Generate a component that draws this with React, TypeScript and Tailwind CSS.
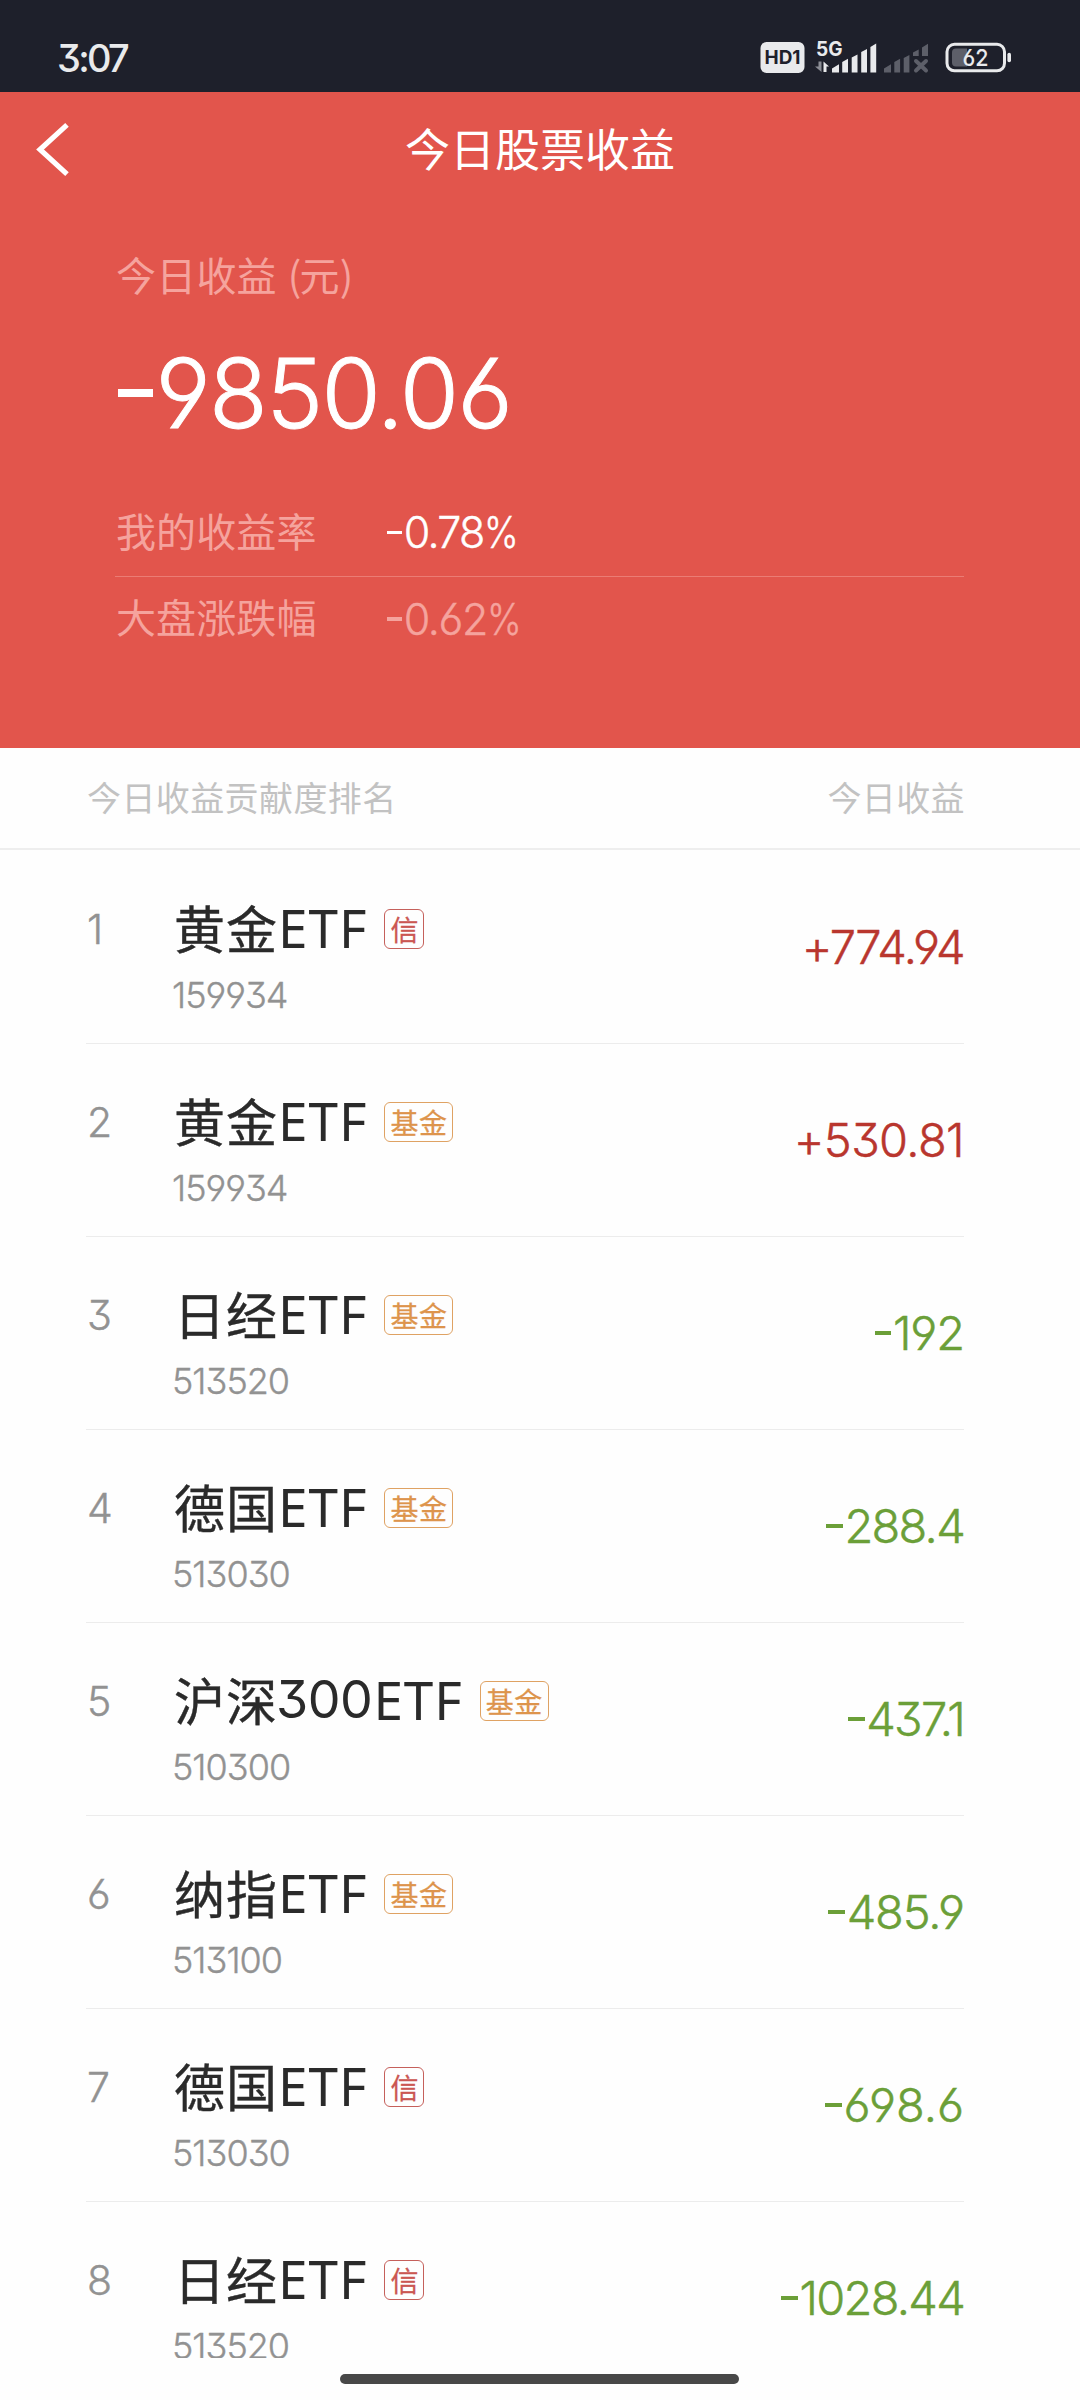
import React from "react";

type Holding = {
  name: string;
  code: string;
  tag: "信" | "基金";
  value: string;
  tracking: string;
  nameNum?: string;
};

const holdings: Holding[] = [
  { name: "黄金", code: "159934", tag: "信", value: "+774.94", tracking: "tracking-[-1.600px]" },
  { name: "黄金", code: "159934", tag: "基金", value: "+530.81", tracking: "tracking-[-0.600px]" },
  { name: "日经", code: "513520", tag: "基金", value: "-192", tracking: "tracking-[-1.100px]" },
  { name: "德国", code: "513030", tag: "基金", value: "-288.4", tracking: "tracking-[-1.700px]" },
  { name: "沪深", nameNum: "300", code: "510300", tag: "基金", value: "-437.1", tracking: "tracking-[-1.700px]" },
  { name: "纳指", code: "513100", tag: "基金", value: "-485.9", tracking: "tracking-[-1.100px]" },
  { name: "德国", code: "513030", tag: "信", value: "-698.6", tracking: "tracking-[0px]" },
  { name: "日经", code: "513520", tag: "信", value: "-1028.44", tracking: "tracking-[-1.700px]" },
];

const num = "font-['Inter',sans-serif] [font-feature-settings:'cv03','cv04','cv09','calt'_0] whitespace-nowrap";

/** Numeric text with a short, raised minus sign and a narrow percent sign. */
function Figure({ text, className }: { text: string; className: string }) {
  const negative = text.startsWith("-");
  const percent = text.endsWith("%");
  const digits = text.slice(negative ? 1 : 0, percent ? -1 : undefined);
  return (
    <span className={`${num} flex items-center font-[350] [-webkit-text-stroke:0.010em] ${className}`}>
      {negative && <span className="mr-[0.03em] block h-[0.075em] w-[0.36em] bg-current" />}
      <span>{digits}</span>
      {percent && <span className="inline-block origin-left scale-x-[0.860]">%</span>}
    </span>
  );
}

function StatusBar() {
  return (
    <div className="flex h-[92px] shrink-0 items-start justify-between bg-[#1e202b] pr-[68px] pl-[57px]">
      <span className={`${num} mt-[36px] text-[38px] leading-[44px] font-medium tracking-[-2.700px] text-[#e9eaec]`}>3:07</span>
      <svg className="mt-[38px]" width="252" height="38" viewBox="760 38 252 38">
        <rect x="760.5" y="42" width="44" height="31" rx="6" fill="#e9eaec" />
        <text x="782.5" y="64.3" textAnchor="middle" textLength="36" lengthAdjust="spacingAndGlyphs" fontFamily="Inter" fontWeight="700" fontSize="19" fill="#1e202b">HD1</text>
        <text x="816" y="56.2" textLength="26.5" lengthAdjust="spacingAndGlyphs" fontFamily="Inter" fontWeight="700" fontSize="20" fill="#e9eaec">5G</text>
        <path d="M821.500 61.500v10.500l-6.500-5.500h3.500v-5z" fill="#8b8d95" />
        <path d="M823.500 72v-10.500l5.500 5h-2.500v5.500z" fill="#e9eaec" />
        <path
          d="M832 72.400v-4l7-4.200v8.200zM842.200 72.400v-10.400l5.800-3.200v13.600zM851.700 72.400v-14.800l5.800-3.200v18zM861.200 72.400v-20.300l5.800-3.200v23.500zM870.400 72.400v-25.400l5.800-3.600v29z"
          fill="#e9eaec"
        />
        <g fill="#5d5f69">
          <path d="M884 72.400v-3.800l7-4.400v8.200zM894.300 72.400v-10.400l5.800-3.200v13.600zM903.700 72.400v-14.300l5.700-3.200v17.500z" />
          <path d="M913 56v-3.600l5.700-3v6.600zM922 56v-8.600l6-3.600v12.200z" />
          <path d="M916 61l10 9.500m0-9.500l-10 9.500" stroke="#5d5f69" strokeWidth="4" strokeLinecap="round" />
        </g>
        <rect x="947" y="44.300" width="57.500" height="26.500" rx="7.500" fill="none" stroke="#e9eaec" strokeWidth="3" />
        <path d="M956 48.500h11v18h-11q-4 0-4-4v-10q0-4 4-4z" fill="#5d5f69" />
        <path d="M1009.200 54.500v6" stroke="#e9eaec" strokeWidth="3.600" strokeLinecap="round" />
        <text x="975.500" y="66" textAnchor="middle" textLength="26" lengthAdjust="spacingAndGlyphs" fontFamily="Inter" fontWeight="500" fontSize="23.500" fill="#e9eaec" className="[font-feature-settings:'cv03']">62</text>
      </svg>
    </div>
  );
}

function Summary() {
  return (
    <div className="h-[656px] shrink-0 bg-[#e2554c] text-white">
      <div className="grid h-[116px] grid-cols-[120px_1fr_120px] items-center">
        <svg className="ml-[34px]" width="38" height="60" viewBox="34 120 38 60" fill="none">
          <path d="M67 124.800L40 149.500L67 174.200" stroke="#fff" strokeWidth="5.200" />
        </svg>
        <h1 className="-mt-[5px] text-center text-[45px] leading-[60px] font-normal">今日股票收益</h1>
      </div>
      <div className="pt-[36px] pr-[116px] pl-[116px]">
        <div className="flex h-[60px] items-center text-[40px] tracking-[0.200px] text-[#f5a39d]">
          <span>今日收益</span>
          <span className="ml-[11px] -mr-[2px]">(</span><span>元)</span>
        </div>
        <div className="mt-[36px] flex h-[106px] items-center">
          <Figure text="-9850.06" className="ml-[2px] text-[96px] leading-[106px] tracking-[-1.600px]" />
        </div>
        <div className="-ml-px mt-[43px] flex h-[88px] items-center border-b border-[#eb7c74]">
          <span className="-mt-[6px] w-[272px] pl-px text-[40px] tracking-[0.100px] text-[#f5a39d]">我的收益率</span>
          <Figure text="-0.78%" className="text-[43px] tracking-[-1.700px]" />
        </div>
        <div className="-ml-px flex h-[84px] items-center text-[#f5a39d]">
          <span className="-mt-[6px] w-[272px] pl-px text-[40px] tracking-[0.100px]">大盘涨跌幅</span>
          <Figure text="-0.62%" className="text-[43px] tracking-[-1.400px]" />
        </div>
      </div>
    </div>
  );
}

function Tag({ kind }: { kind: Holding["tag"] }) {
  return kind === "信" ? (
    <span className="flex h-[40px] w-[40px] items-center justify-center rounded-[6px] border-[1.500px] border-[#c5605b] text-[28px] leading-none text-[#cb5752] [-webkit-text-stroke:0.300px]">信</span>
  ) : (
    <span className="flex h-[40px] w-[69px] items-center justify-center rounded-[6px] border-[1.500px] border-[#dfa263] text-[28px] leading-none tracking-[0.500px] text-[#dd944c] [-webkit-text-stroke:0.300px]">基金</span>
  );
}

function Row({ item, rank }: { item: Holding; rank: number }) {
  const positive = item.value.startsWith("+");
  return (
    <li className="flex h-[193px] shrink-0 border-b border-[#ececec]">
      <span className={`${num} mt-[54px] w-[86px] pl-px text-[41px] leading-[48px] font-[350] text-[#929292] [-webkit-text-stroke:0.010em]`}>{rank}</span>
      <div className="flex flex-col">
        <div className="mt-[45px] flex h-[64px] items-center pl-[2px] text-[#2a2a2a]">
          <span className="-mt-[3px] text-[51px] leading-[64px] tracking-[1px] [-webkit-text-stroke:0.400px]">{item.name}</span>
          {item.nameNum && <span className={`${num} -ml-[2px] mr-[1px] text-[52px] leading-[64px] tracking-[-0.500px]`}>{item.nameNum}</span>}
          <span className="font-['Noto_Sans',sans-serif] text-[53px] leading-[64px] tracking-[1px]">ETF</span>
          <span className="mt-[2px] ml-[17px]"><Tag kind={item.tag} /></span>
        </div>
        <span className={`${num} mt-[14px] text-[36px] leading-[42px] font-[350] tracking-[-1px] text-[#929292] [-webkit-text-stroke:0.010em]`}>{item.code}</span>
      </div>
      <Figure
        text={item.value}
        className={`mt-[68px] ml-auto h-[56px] text-[47px] leading-[56px] ${item.tracking} ${positive ? "text-[#b9362e]" : "text-[#6b9f38]"}`}
      />
    </li>
  );
}

export default function App() {
  return (
    <main className="flex h-[2400px] w-[1080px] flex-col overflow-hidden bg-[#fefefe] font-['Noto_Sans_CJK_SC',sans-serif]">
      <StatusBar />
      <Summary />
      <div className="flex h-[102px] shrink-0 items-center justify-between border-b-2 border-[#eeeeee] pr-[115px] pb-[3px] pl-[87px] text-[34px] tracking-[0.400px] text-[#c2c2c2]">
        <span>今日收益贡献度排名</span>
        <span>今日收益</span>
      </div>
      <ul className="flex h-[1508px] shrink-0 flex-col overflow-hidden pt-px pr-[116px] pl-[86px]">
        {holdings.map((item, i) => (
          <Row key={i} item={item} rank={i + 1} />
        ))}
      </ul>
      <div className="mt-[16px] ml-[340px] h-[10px] w-[399px] shrink-0 rounded-full bg-[#484848]" />
    </main>
  );
}
